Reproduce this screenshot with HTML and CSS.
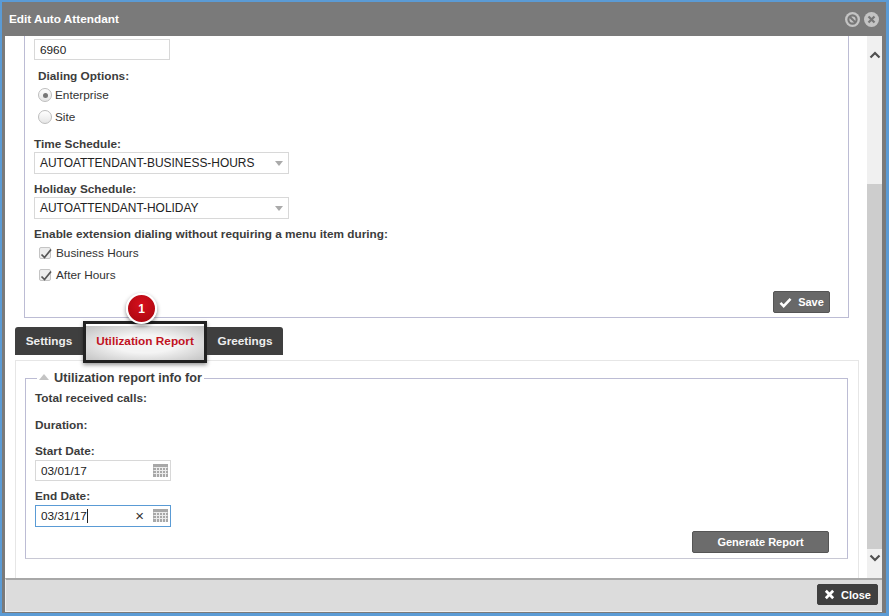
FILE: index.html
```html
<!DOCTYPE html>
<html lang="en">
<head>
<meta charset="utf-8">
<title>Edit Auto Attendant</title>
<link rel="stylesheet" href="styles.css">
</head>
<body>
<div class="window">
  <header class="titlebar">
    <span class="title">Edit Auto Attendant</span>
    <span class="win-icons">
      <svg class="win-icon" viewBox="0 0 16 16"><circle cx="8" cy="8" r="8" fill="#c4c4c4"/><circle cx="8" cy="8" r="4.4" fill="none" stroke="#777" stroke-width="2.200"/><path d="M5 5l6 6" stroke="#777" stroke-width="2.200"/></svg>
      <svg class="win-icon" viewBox="0 0 16 16"><circle cx="8" cy="8" r="8" fill="#c4c4c4"/><path d="M4.800 4.800l6.400 6.400M11.200 4.800l-6.400 6.400" stroke="#777" stroke-width="2.400"/></svg>
    </span>
  </header>
  <div class="body">
    <main class="content">
      <section class="panel">
        <div class="input input-short">6960</div>
        <div class="label label-dial">Dialing Options:</div>
        <div class="option option-first"><span class="radio radio-on"></span>Enterprise</div>
        <div class="option"><span class="radio"></span>Site</div>
        <div class="label label-time">Time Schedule:</div>
        <div class="select">AUTOATTENDANT-BUSINESS-HOURS<span class="caret"></span></div>
        <div class="label label-holiday">Holiday Schedule:</div>
        <div class="select">AUTOATTENDANT-HOLIDAY<span class="caret"></span></div>
        <div class="label label-enable">Enable extension dialing without requiring a menu item during:</div>
        <div class="check-row check-first"><span class="checkbox"><svg viewBox="0 0 12 12"><path d="M1.500 6.500l3 3L11 1.500" fill="none" stroke="#555" stroke-width="1.700"/></svg></span>Business Hours</div>
        <div class="check-row"><span class="checkbox"><svg viewBox="0 0 12 12"><path d="M1.500 6.500l3 3L11 1.500" fill="none" stroke="#555" stroke-width="1.700"/></svg></span>After Hours</div>
        <div class="actions">
          <button class="btn btn-save"><svg class="btn-icon" viewBox="0 0 14 12"><path d="M1.500 6.500l3.500 3.500L12.500 2" fill="none" stroke="#fff" stroke-width="2.800"/></svg>Save</button>
        </div>
      </section>
      <nav class="tabs">
        <span class="tab">Settings</span>
        <span class="tab tab-active">Utilization Report
          <span class="highlight"></span>
          <span class="badge">1</span>
        </span>
        <span class="tab">Greetings</span>
      </nav>
      <section class="tab-panel">
        <fieldset class="report">
          <legend class="report-legend"><span class="legend-arrow"></span>Utilization report info for</legend>
          <div class="label">Total received calls:</div>
          <div class="label label-duration">Duration:</div>
          <div class="label label-start">Start Date:</div>
          <div class="input input-date">03/01/17
            <svg class="cal" viewBox="0 0 15 13"><path d="M0 0h15v13H0z" fill="#a8a8a8"/><path d="M.5 3.500h14M.5 6.500h14M.5 9.500h14M3.500 3v10M6.500 3v10M9.500 3v10M12.500 3v10" stroke="#ececec" stroke-width="1"/></svg>
          </div>
          <div class="label label-end">End Date:</div>
          <div class="input input-date input-focus"><span>03/31/17<span class="cursor"></span></span>
            <span class="clear">×</span>
            <svg class="cal" viewBox="0 0 15 13"><path d="M0 0h15v13H0z" fill="#a8a8a8"/><path d="M.5 3.500h14M.5 6.500h14M.5 9.500h14M3.500 3v10M6.500 3v10M9.500 3v10M12.500 3v10" stroke="#ececec" stroke-width="1"/></svg>
          </div>
          <div class="actions actions-report">
            <button class="btn btn-generate">Generate Report</button>
          </div>
        </fieldset>
      </section>
    </main>
    <aside class="scrollbar">
      <svg class="chev" viewBox="0 0 12 8"><path d="M1.500 6.500L6 2l4.500 4.500" fill="none" stroke="#505050" stroke-width="2.200"/></svg>
      <div class="track"><div class="thumb"></div></div>
      <svg class="chev" viewBox="0 0 12 8"><path d="M1.500 1.500L6 6l4.500-4.500" fill="none" stroke="#505050" stroke-width="2.200"/></svg>
    </aside>
  </div>
  <footer class="footer">
    <button class="btn btn-close"><svg class="btn-icon-close" viewBox="0 0 12 12"><path d="M2 2l8 8M10 2l-8 8" stroke="#fff" stroke-width="3"/></svg>Close</button>
  </footer>
</div>
</body>
</html>
```
FILE: styles.css
```css
* { box-sizing: border-box; }
html, body { margin: 0; height: 100%; }
body {
  background: #5b9bd5;
  padding: 2px 3px 3px 2px;
  font-family: "Liberation Sans", Arial, sans-serif;
  font-size: 11.8px;
  color: #333;
  overflow: hidden;
}
.window {
  height: 611px;
  display: flex;
  flex-direction: column;
  background: #fff;
  border: solid #7a7a7a;
  border-width: 0 4px 1px 3px;
}
.titlebar {
  height: 34px;
  flex: none;
  margin: 0 -4px 0 -3px;
  padding: 0 7px 0 7px;
  background: #7a7a7a;
  display: flex;
  align-items: center;
  justify-content: space-between;
  color: #fff;
  font-weight: bold;
}
.win-icons { display: flex; gap: 4px; margin-top: 1px; }
.win-icon { width: 15px; height: 15px; display: block; }
.body { flex: 1; display: flex; min-height: 0; }
.content { flex: 1; min-width: 0; padding-left: 10px; position: relative; }
.panel {
  height: 282px;
  margin: 0 18px 0 9px;
  padding: 3px 9px 0;
  border: solid #bcbcd4;
  border-width: 0 1px 1px 1px;
}
.label { font-weight: bold; color: #3c3c3c; line-height: 14px; }
.input, .select {
  border: 1px solid #d8d8d8;
  background: #fff;
  color: #222;
  padding-left: 5px;
  display: flex;
  align-items: center;
}
.input-short { width: 136px; height: 21px; }
.label-dial { margin: 9px 0 0 4px; }
.option { display: flex; align-items: center; height: 14px; margin-top: 8px; padding-left: 4px; }
.option-first { margin-top: 5px; }
.radio {
  width: 14px; height: 14px; margin-right: 3px;
  border: 1px solid #bdbdbd; border-radius: 50%;
  background: linear-gradient(#fff, #e6e6e6);
  display: flex; align-items: center; justify-content: center;
}
.radio-on::after { content: ""; width: 5px; height: 5px; border-radius: 50%; background: #777; }
.label-time { margin-top: 13px; }
.select { width: 255px; height: 22px; margin-top: 1px; position: relative; font-size: 11.950px; }
.caret {
  position: absolute; right: 5px; top: 8px;
  border: solid transparent; border-width: 5px 4px 0;
  border-top-color: #aaa;
}
.label-holiday { margin-top: 8px; }
.label-enable { margin-top: 8px; }
.check-row { display: flex; align-items: center; height: 14px; padding-left: 5px; }
.check-first { margin-top: 5px; }
.check-row + .check-row { margin-top: 8px; }
.checkbox {
  width: 12px; height: 12px; margin-right: 5px;
  border: 1px solid #c4c4c4; border-radius: 2px;
  background: #ececec; display: block;
}
.checkbox svg { display: block; width: 12px; height: 12px; }
.actions { display: flex; justify-content: flex-end; margin: 9px 9px 0 0; }
.btn {
  border: 1px solid #555;
  border-radius: 2px;
  background: #686868;
  color: #fff;
  font: bold 11px "Liberation Sans", Arial, sans-serif;
  display: flex; align-items: center; justify-content: center;
  padding: 0;
}
.btn-save { width: 57px; height: 22px; }
.btn-icon { width: 13px; height: 11px; margin-right: 6px; }
.tabs { display: flex; margin: 9px 0 0; height: 28px; padding-left: 0; }
.tab {
  height: 28px; background: #3f3f3f; color: #eee; font-weight: bold;
  display: flex; align-items: center; justify-content: center;
  width: 68px;
  position: relative;
}
.tab:first-child { border-radius: 3px 0 0 0; }
.tab:last-child { width: 76px; border-radius: 0 3px 0 0; }
.tab-active {
  width: 124px; height: 36px; margin-top: -1px;
  padding-bottom: 7px;
  color: #c1121f;
  background: radial-gradient(ellipse at center, #f4f4f4 35%, #bdbdbd 100%);
}
.highlight {
  position: absolute; left: 0; right: 0; top: -5px; bottom: -1px;
  border: 3px solid #222;
  box-shadow: 0 2px 4px rgba(0,0,0,.4);
}
.badge {
  position: absolute; left: 43px; top: -33px;
  width: 31px; height: 31px; border-radius: 50%;
  background: radial-gradient(circle at 50% 35%, #d6101c, #a5060f);
  border: 2px solid #fff;
  box-shadow: 0 2px 4px rgba(0,0,0,.45);
  color: #fff; font-size: 12px;
  display: flex; align-items: center; justify-content: center;
}
.tab-panel {
  margin-top: 5px;
  height: 218px;
  padding: 10px 9px 0;
  border: solid #e6e6e6;
  border-width: 1px 1px 0 1px;
  width: 844px;
}
.report {
  margin: 0;
  width: 823px;
  height: 188px;
  padding: 6px 0 0 9px;
  border: 1px solid #bcbcd4;
  border-bottom-color: #c8c8d4;
  min-width: 0;
}
.report-legend { font-weight: bold; color: #3c3c3c; font-size: 12.700px; padding: 0 2px; margin-left: 2px; }
.legend-arrow {
  display: inline-block; margin-right: 5px; vertical-align: 2px;
  border: solid transparent; border-width: 0 5px 6px;
  border-bottom-color: #c4c4c4;
}
.label-duration { margin-top: 13px; }
.label-start { margin-top: 12px; }
.input-date { width: 136px; height: 21px; margin-top: 2px; position: relative; }
.label-end { margin-top: 8px; }
.input-focus { border-color: #5a9bd5; height: 22px; }
.cursor { display: inline-block; width: 1px; height: 14px; background: #222; vertical-align: -3px; }
.cal { position: absolute; right: 2px; top: 3px; width: 15px; height: 13px; }
.clear { position: absolute; right: 26px; top: 1px; font-size: 15px; line-height: 18px; color: #333; }
.actions-report { margin: 4px 18px 0 0; }
.btn-generate { width: 137px; height: 22px; background: #6c6c6c; }
.scrollbar { width: 15px; flex: none; background: #f0f0f0; display: flex; flex-direction: column; align-items: center; }
.chev { width: 12px; height: 8px; flex: none; margin: 15px 0 10px; display: block; }
.scrollbar .chev:last-child { margin: 5px 0 16px; }
.track { flex: 1; width: 100%; position: relative; }
.thumb { position: absolute; left: 0; right: 0; top: 115px; bottom: 0; background: #cdcdcd; }
.footer {
  height: 34px; flex: none;
  background: #dcdcdc;
  border-top: 2px solid #a8a8a8;
  border-left: 1px solid #eee;
  border-bottom: 1px solid #eee;
  display: flex; align-items: center; justify-content: flex-end;
  padding: 0 4px 2px 0;
}
.btn-close { width: 61px; height: 21px; background: #3f3f3f; border-color: #3f3f3f; }
.btn-icon-close { width: 11px; height: 11px; margin-right: 6px; }
```
